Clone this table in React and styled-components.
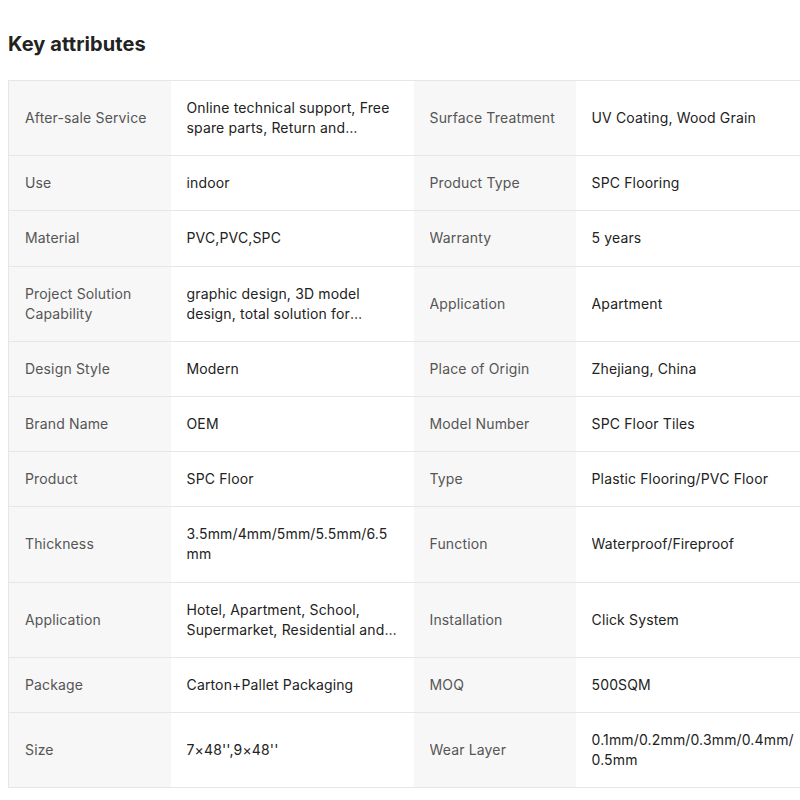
import React from 'react';
import styled, { createGlobalStyle } from 'styled-components';

const GlobalStyle = createGlobalStyle`
  html, body {
    overflow: hidden;
  }
  body {
    margin: 0;
    padding: 0 8px;
    background: #fff;
    font-family: Inter, 'Noto Sans', sans-serif;
  }
`;

const Title = styled.h2`
  margin: 30px 0 22px;
  font-size: 20px;
  line-height: 28px;
  font-weight: 700;
  letter-spacing: 0.1px;
  color: #222;
`;

const Table = styled.table`
  width: 810px;
  border-collapse: collapse;
  table-layout: fixed;
  border: 1px solid #e6e6e6;
  font-size: 14px;
  line-height: 20px;
  letter-spacing: 0.15px;
`;

const Col = styled.col`
  width: ${p => (p.$label ? '162px' : '243px')};
`;

const Row = styled.tr`
  border-bottom: 1px solid #e6e6e6;
`;

const Label = styled.td`
  padding: 17.1px 16px;
  background: #f7f7f7;
  color: #555;
  vertical-align: middle;
`;

const Value = styled.td`
  padding: 17.1px 16px;
  color: #222;
  vertical-align: middle;
`;

const Clamp = styled.div`
  display: -webkit-box;
  -webkit-box-orient: vertical;
  -webkit-line-clamp: 2;
  overflow: hidden;
  overflow-wrap: anywhere;
`;

const rows = [
  ['After-sale Service', 'Online technical support, Free spare parts, Return and Replacement', 'Surface Treatment', 'UV Coating, Wood Grain'],
  ['Use', 'indoor', 'Product Type', 'SPC Flooring'],
  ['Material', 'PVC,PVC,SPC', 'Warranty', '5 years'],
  ['Project Solution Capability', 'graphic design, 3D model design, total solution for projects, Cross Categories Consolidation', 'Application', 'Apartment'],
  ['Design Style', 'Modern', 'Place of Origin', 'Zhejiang, China'],
  ['Brand Name', 'OEM', 'Model Number', 'SPC Floor Tiles'],
  ['Product', 'SPC Floor', 'Type', 'Plastic Flooring/PVC Floor'],
  ['Thickness', '3.5mm/4mm/5mm/5.5mm/6.5mm', 'Function', 'Waterproof/Fireproof'],
  ['Application', 'Hotel, Apartment, School, Supermarket, Residential and Commercial', 'Installation', 'Click System'],
  ['Package', 'Carton+Pallet Packaging', 'MOQ', '500SQM'],
  ['Size', '7×48\'\',9×48\'\'', 'Wear Layer', '0.1mm/0.2mm/0.3mm/0.4mm/0.5mm'],
];

const App = () => (
  <>
    <GlobalStyle />
    <Title>Key attributes</Title>
    <Table>
      <colgroup>
        <Col $label />
        <Col />
        <Col $label />
        <Col />
      </colgroup>
      <tbody>
        {rows.map((r, i) => (
          <Row key={i}>
            <Label><Clamp>{r[0]}</Clamp></Label>
            <Value><Clamp>{r[1]}</Clamp></Value>
            <Label><Clamp>{r[2]}</Clamp></Label>
            <Value><Clamp>{r[3]}</Clamp></Value>
          </Row>
        ))}
      </tbody>
    </Table>
  </>
);

export default App;
